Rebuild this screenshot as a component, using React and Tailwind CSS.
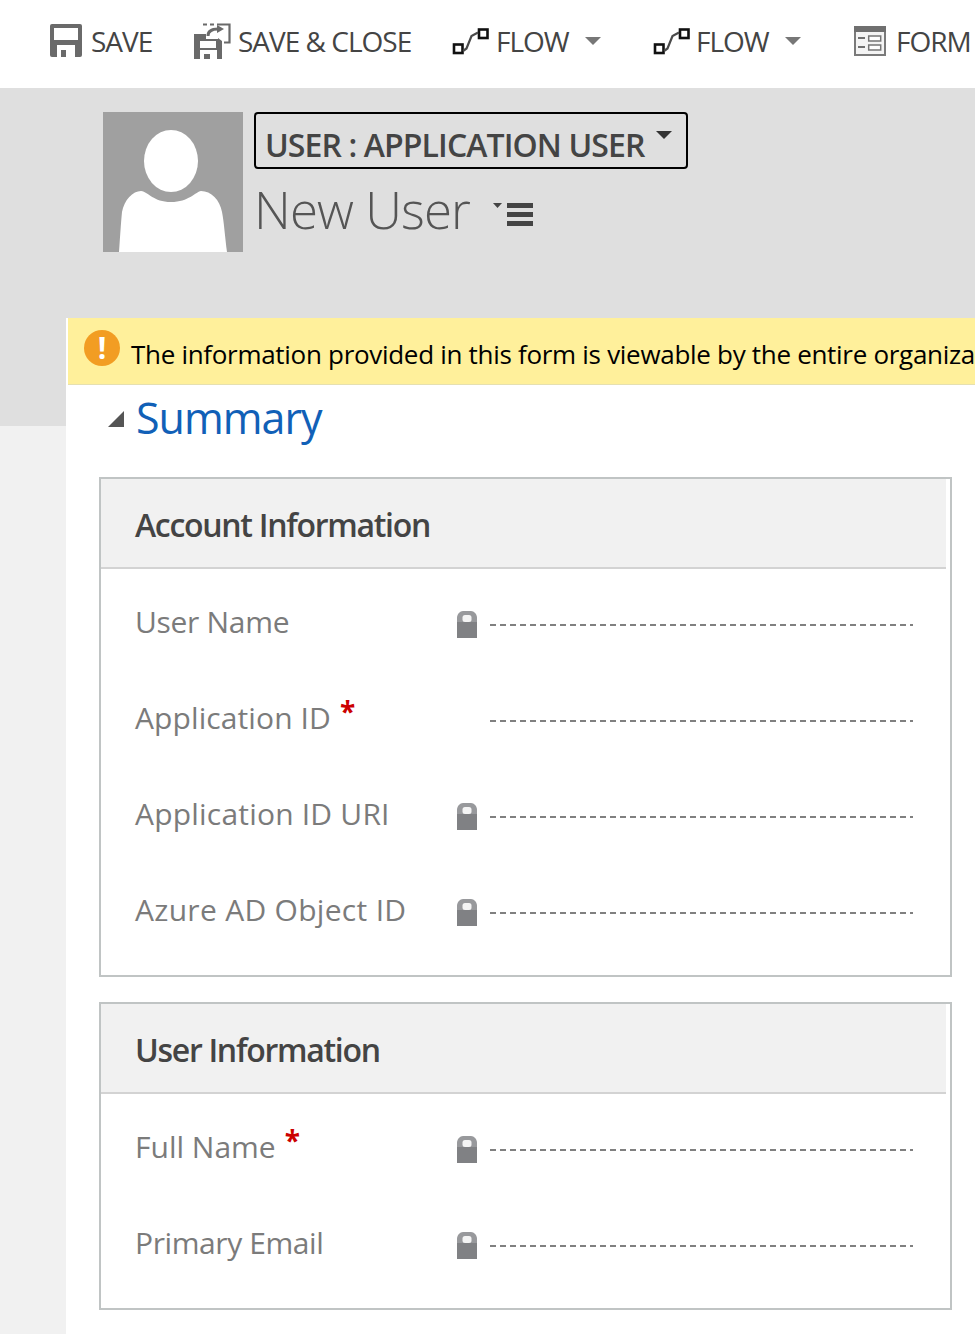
function SaveIcon() {
  return (
    <svg width="32" height="34" viewBox="0 0 32 34" className="shrink-0">
      <path fill="#6a6a6a" d="M2 0H30a2 2 0 0 1 2 2V31a2 2 0 0 1-2 2H2a2 2 0 0 1-2-2V2a2 2 0 0 1 2-2Z" />
      <rect x="4" y="4" width="24" height="12" fill="#fff" />
      <rect x="7" y="21" width="18" height="12" fill="#fff" />
      <rect x="11" y="26" width="5" height="7" fill="#6a6a6a" />
    </svg>
  );
}

function SaveCloseIcon() {
  return (
    <svg width="37" height="36" viewBox="0 0 37 36" className="shrink-0">
      <path fill="#6a6a6a" d="M0 11H12V16H24V15L28 18V36H0Z" />
      <rect x="6" y="18" width="16" height="7" fill="#fff" />
      <rect x="6" y="27" width="17" height="9" fill="#fff" />
      <rect x="10" y="31" width="6" height="5" fill="#6a6a6a" />
      <path fill="none" stroke="#6a6a6a" strokeWidth="2.2" d="M9 1.5H13M16 1.5H20M23 1.5H35.5V19.5H30" />
      <path fill="none" stroke="#6a6a6a" strokeWidth="3" d="M14 13C14 8 18 6 24 6" />
      <path fill="#6a6a6a" d="M23 2L30 6L23 10Z" />
    </svg>
  );
}

function FlowIcon() {
  return (
    <svg width="37" height="27" viewBox="0 0 37 27" className="shrink-0">
      <rect x="2" y="16.5" width="8.5" height="8.5" fill="none" stroke="#111111" strokeWidth="2.6" />
      <rect x="27" y="1.5" width="8.5" height="8.5" fill="none" stroke="#111111" strokeWidth="2.6" />
      <path d="M11 23L14.5 20.5L19.5 8L26 4.5" fill="none" stroke="#4a4a4a" strokeWidth="2.2" />
    </svg>
  );
}

function FormIcon() {
  return (
    <svg width="32" height="30" viewBox="0 0 32 30" className="shrink-0">
      <rect x="1" y="1" width="30" height="28" fill="#f4f4f4" stroke="#7a7a7a" strokeWidth="2" />
      <rect x="0" y="0" width="32" height="6" fill="#6f6f6f" />
      <rect x="4" y="11" width="7" height="2" fill="#707070" />
      <rect x="4" y="20" width="7" height="2" fill="#707070" />
      <rect x="14.7" y="10" width="12" height="5" fill="#fff" stroke="#757575" strokeWidth="1.5" />
      <rect x="14.7" y="19" width="12" height="5" fill="#fff" stroke="#757575" strokeWidth="1.5" />
    </svg>
  );
}

function Caret() {
  return <span className="w-0 h-0 border-x-[8px] border-x-transparent border-t-[8px] border-t-[#777777]" />;
}

function Toolbar() {
  return (
    <div className="h-[88px] pb-[6px] bg-white flex items-center overflow-hidden whitespace-nowrap text-[28px] text-[#444444] tracking-[-1px]">
      <div className="flex items-center ml-[50px] w-[144px]">
        <SaveIcon />
        <span className="ml-[9px]">SAVE</span>
      </div>
      <div className="flex items-center w-[258px]">
        <SaveCloseIcon />
        <span className="ml-[7px]">SAVE &amp; CLOSE</span>
      </div>
      <div className="flex items-center w-[201px]">
        <FlowIcon />
        <span className="ml-[7px]">FLOW</span>
        <span className="ml-[16px] flex"><Caret /></span>
      </div>
      <div className="flex items-center w-[201px]">
        <FlowIcon />
        <span className="ml-[6px]">FLOW</span>
        <span className="ml-[16px] flex"><Caret /></span>
      </div>
      <div className="flex items-center">
        <FormIcon />
        <span className="ml-[10px]">FORM</span>
      </div>
    </div>
  );
}

function Avatar() {
  return (
    <svg width="140" height="140" viewBox="0 0 140 140" className="shrink-0">
      <rect width="140" height="140" fill="#a0a0a0" />
      <ellipse cx="68" cy="49" rx="27" ry="31" fill="#fff" />
      <path fill="#fff" d="M16 140C17 125 18 110 19 100C21 88 30 79 38 79C46 80 50 90 68 90C86 90 92 80 98 79C108 79 117 88 119 100C121 110 122 125 124 140Z" />
    </svg>
  );
}

function Header() {
  return (
    <div className="h-[338px] bg-[#dfdfdf] pt-[24px] pl-[103px] flex items-start">
      <Avatar />
      <div className="ml-[11px]">
        <div className="w-[434px] h-[57px] border-2 border-black rounded-[4px] flex items-start pl-[9px] pt-[9px] text-[32px] leading-[44px] text-[#444444] tracking-[-0.9px] font-semibold whitespace-nowrap">
          <span>USER : APPLICATION USER</span>
          <span className="ml-[11px] mt-[8px] w-0 h-0 border-x-[8px] border-x-transparent border-t-[8px] border-t-[#333333]" />
        </div>
        <div className="flex items-center h-[84px] -mt-[2px]">
          <span className="text-[51px] leading-[60px] font-light text-[#555555] tracking-[-0.9px] whitespace-nowrap">New User</span>
          <svg width="40" height="28" viewBox="0 0 40 28" className="ml-[23px] mt-[9px]">
            <path d="M0 3H9L4.5 8Z" fill="#444444" />
            <rect x="14" y="3" width="26" height="5" fill="#444444" />
            <rect x="14" y="12" width="26" height="5" fill="#444444" />
            <rect x="14" y="21" width="26" height="5" fill="#444444" />
          </svg>
        </div>
      </div>
    </div>
  );
}

function Lock() {
  return (
    <svg width="20" height="27" viewBox="0 0 20 27">
      <path fill="#98999c" d="M0 12V7C0 3 3 0 6 0H14C17 0 20 3 20 7V12Z" />
      <rect x="0" y="11" width="20" height="16" fill="#808184" />
      <rect x="5.5" y="4" width="9" height="7" rx="2.5" fill="#f4f4f4" />
    </svg>
  );
}

function Row({ label, required, locked = true, tracking }) {
  return (
    <div className="h-[96px] flex items-center relative">
      <div className={`w-[320px] pl-[34px] text-[30px] text-[#7b7b7b] whitespace-nowrap flex items-start ${tracking}`}>
        <span className="leading-[40px]">{label}</span>
        {required && <span className="ml-[9px] -mt-[2px] text-[28px] leading-[30px] font-bold text-[#cc0000]">*</span>}
      </div>
      <div className="w-[20px] flex mt-[5px] ml-[36px] shrink-0">{locked && <Lock />}</div>
      <div className="ml-[13px] mt-[5px] w-[423px] h-[2px] bg-[repeating-linear-gradient(to_right,#808080_0,#808080_6px,transparent_6px,transparent_10px)]" />
    </div>
  );
}

function Section({ title, children }) {
  return (
    <div className="w-[853px] border-2 border-[#c0c4c4]">
      <div className="w-[845px] h-[90px] pt-[4px] bg-[#f1f1f1] border-b-2 border-[#d3d3d3] flex items-center pl-[34px] text-[32px] font-semibold text-[#444444] tracking-[-1.3px] whitespace-nowrap">
        {title}
      </div>
      <div className="pt-[5px] pb-[17px]">{children}</div>
    </div>
  );
}

export default function App() {
  return (
    <div className="w-[975px] h-[1334px] overflow-hidden bg-[#f1f1f1] font-['Open_Sans',sans-serif]">
      <Toolbar />
      <Header />
      <div className="ml-[66px] -mt-[108px] h-[1016px] bg-white relative">
        <div className="ml-[2px] h-[67px] bg-[#fff09b] border-b border-[#e6e0b0] flex items-start whitespace-nowrap overflow-hidden">
          <span className="ml-[16px] mt-[12px] w-[36px] h-[36px] rounded-full bg-[#f29d23] flex items-center justify-center text-white text-[30px] font-bold leading-none shrink-0">!</span>
          <span className="ml-[11px] mt-[18px] text-[26px] leading-[36px] text-black tracking-[-0.3px]">The information provided in this form is viewable by the entire organization</span>
        </div>
        <div className="h-[92px] flex items-start">
          <span className="ml-[42px] mt-[26px] w-0 h-0 border-l-[16px] border-l-transparent border-b-[16px] border-b-[#555555]" />
          <span className="ml-[12px] mt-[4px] text-[43px] leading-[58px] text-[#1160b7] tracking-[-1px]">Summary</span>
        </div>
        <div className="ml-[33px] flex flex-col gap-[25px]">
          <Section title="Account Information">
            <Row label="User Name" tracking="tracking-[-0.3px]" />
            <Row label="Application ID" required locked={false} tracking="tracking-[0.1px]" />
            <Row label="Application ID URI" tracking="tracking-[0.2px]" />
            <Row label="Azure AD Object ID" tracking="tracking-[0.3px]" />
          </Section>
          <Section title="User Information">
            <Row label="Full Name" required tracking="tracking-[0px]" />
            <Row label="Primary Email" tracking="tracking-[-0.4px]" />
          </Section>
        </div>
      </div>
    </div>
  );
}
